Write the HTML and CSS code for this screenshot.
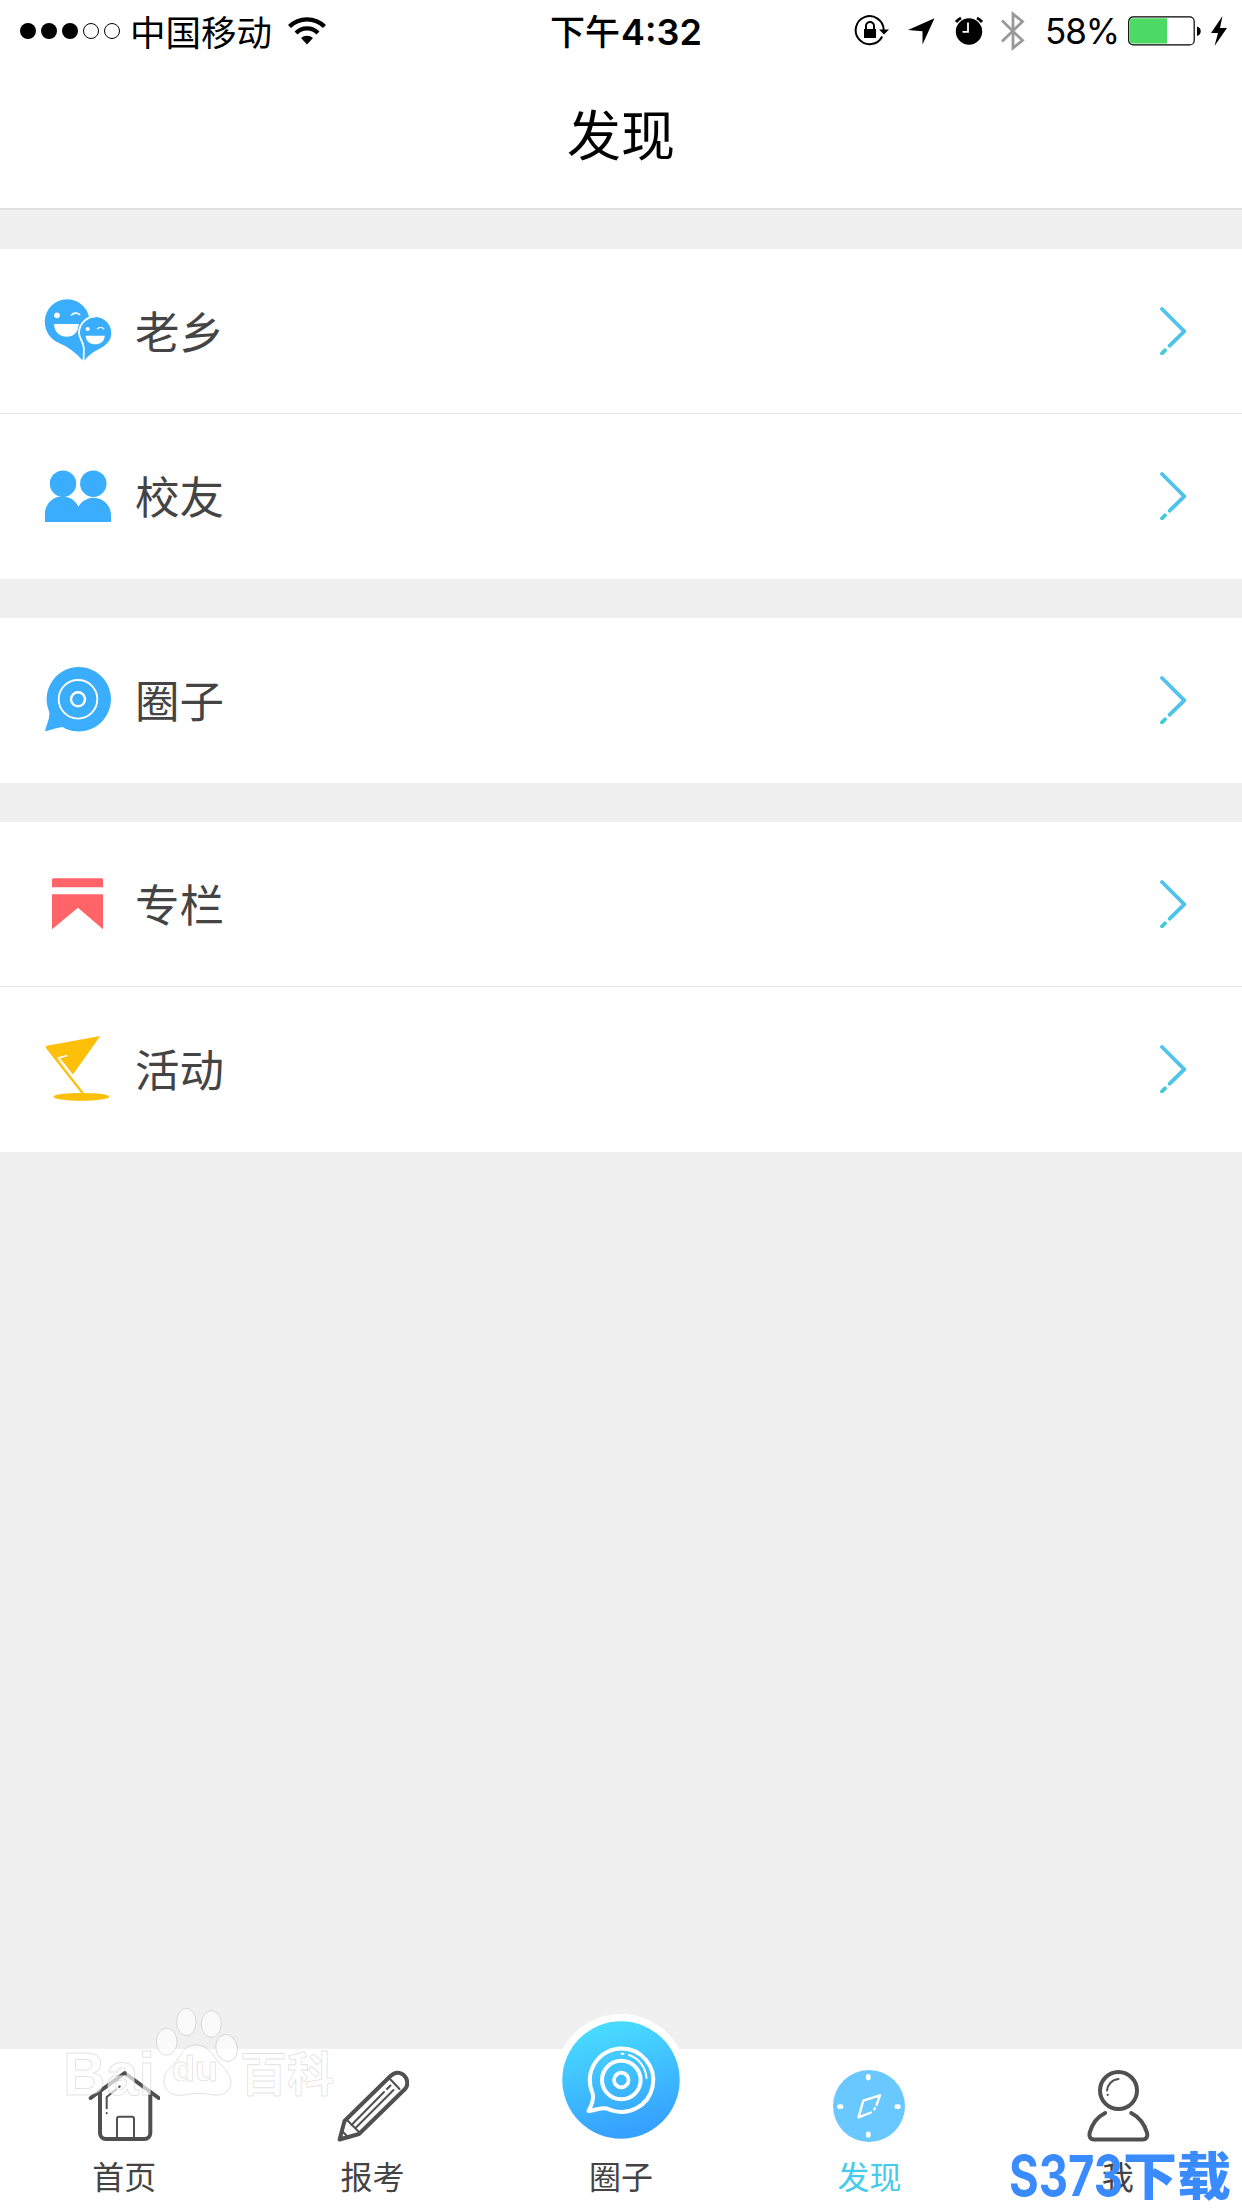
FILE: index.html
```html
<!DOCTYPE html>
<html lang="zh-CN">
<head>
  <meta charset="UTF-8" />
  <meta name="viewport" content="width=device-width, initial-scale=1" />
  <title>发现</title>
  <link rel="stylesheet" href="styles.css">
</head>
<body>
  <div class="app">
    <div class="status-bar">
      <div class="status-left">
        <svg class="signal" width="104" height="20" viewBox="0 0 104 20">
          <circle cx="10" cy="10" r="8"/>
          <circle cx="31" cy="10" r="8"/>
          <circle cx="52" cy="10" r="8"/>
          <circle class="empty" cx="73" cy="10" r="7.5"/>
          <circle class="empty" cx="94" cy="10" r="7.5"/>
        </svg>
        <span class="carrier">中国移动</span>
        <svg class="wifi" width="38" height="28" viewBox="0 0 38 28">
          <path d="M1.500 9.500a25 25 0 0 1 35 0M8 16a15.600 15.600 0 0 1 22 0" fill="none" stroke="#000" stroke-width="4.200"/>
          <path d="M19 27.500l-6-6.500a9 9 0 0 1 12 0z"/>
        </svg>
      </div>
      <div class="status-time">下午<b>4:32</b></div>
      <div class="status-right">
        <svg class="lock" width="36" height="32" viewBox="0 0 36 32">
          <path d="M28.200 21.500a14 14 0 1 1 1.500-6.500" fill="none" stroke="#000" stroke-width="2"/>
          <path d="M25 14.500h10l-5 5zM10 14h12v9H10z"/>
          <path d="M12 14v-3a4 4 0 0 1 8 0v3" fill="none" stroke="#000" stroke-width="2"/>
        </svg>
        <svg class="locate" width="27" height="27" viewBox="0 0 27 27"><path d="M26.500.3L14.500 26.500V13.300L0 12z"/></svg>
        <svg class="alarm" width="30" height="30" viewBox="0 0 30 30">
          <circle cx="15" cy="15.500" r="13.200"/>
          <path d="M2 6a15 15 0 0 1 5-4M28 6a15 15 0 0 0-5-4" fill="none" stroke="#000" stroke-width="3"/>
          <path d="M14 6.500v9.300H8.500" fill="none" stroke="#fff" stroke-width="1.800"/>
        </svg>
        <svg class="bluetooth" width="24" height="42" viewBox="0 0 24 42"><path d="M1 10.500l20.500 20L12 38V4l9.500 7.500L1 31.500" fill="none" stroke="#999" stroke-width="2.800"/></svg>
        <span class="percent">58%</span>
        <svg class="battery" width="74" height="30" viewBox="0 0 74 30">
          <rect x=".7" y=".9" width="65.500" height="28" rx="4.500" fill="none" stroke="#000" stroke-width="1.200"/>
          <path d="M4 2.300h35v25.200H4a2 2 0 0 1-2-2V4.300a2 2 0 0 1 2-2z" fill="#4cd964"/>
          <path d="M69 10.500c5 1 5 8.500 0 9.500z"/>
        </svg>
        <svg class="bolt" width="17" height="30" viewBox="0 0 17 30"><path d="M11.500 0L0 17h7L3.500 30 16 12H9z"/></svg>
      </div>
    </div>

    <header>发现</header>

    <main>
      <div class="group">
        <div class="row">
          <svg class="row-icon" viewBox="0 0 72 72">
            <path class="blue" d="M25 4.300A22.300 22.300 0 0 0 2.800 26.500C2.800 38 9.500 45 18 48.500S34 58 40.300 65.200C45 57 47 44 47.500 28A22.300 22.300 0 0 0 25 4.300z"/>
            <path class="blue" d="M53 22A16.200 16.200 0 0 0 37 38.300C37 42 41.500 47 41.800 51L41.300 66.500C47 60 51 57 57 54S69.300 46.500 69.300 38.300A16.200 16.200 0 0 0 53 22z"/>
            <path class="white-line" d="M53 21.500A16.500 16.500 0 0 0 37 38c0 5 4.500 9 4.800 15 .2 5-.2 9-.3 13" stroke-width="1.800"/>
            <circle cx="15" cy="20.300" r="2.900" fill="#fff"/>
            <path class="white-line" d="M29.500 20c2-2.400 6-2.600 8.200-.3" stroke-width="1.600"/>
            <path fill="#fff" d="M12 29h25c-.5 1.300-.8 2.500-1 4.800-1.500 5-6 8-11 8C18 41.800 12 37 12 29z"/>
            <circle cx="45.700" cy="34" r="2.100" fill="#fff"/>
            <path class="white-line" d="M55.500 33.800c1.800-1.700 4.500-1.700 6.200 0" stroke-width="1.300"/>
            <path fill="#fff" d="M43.700 40.700h19c0 11.500-19 11.500-19 0z"/>
          </svg>
          <span class="row-text">老乡</span>
          <svg class="arrow" viewBox="0 0 32 48"><path d="M4 2l22.300 22.300-14.600 14.400M7 43.300l-3 3"/></svg>
        </div>
        <div class="row">
          <svg class="row-icon" viewBox="0 0 72 72">
            <circle class="blue" cx="21" cy="23.700" r="13.200"/>
            <circle class="blue" cx="51.300" cy="23.700" r="13.200"/>
            <path class="blue" d="M3 62V56A17.500 17.500 0 0 1 36.300 46.700 17.500 17.500 0 0 1 69 56V62z"/>
          </svg>
          <span class="row-text">校友</span>
          <svg class="arrow" viewBox="0 0 32 48"><path d="M4 2l22.300 22.300-14.600 14.400M7 43.300l-3 3"/></svg>
        </div>
      </div>

      <div class="group">
        <div class="row">
          <svg class="row-icon" viewBox="0 0 72 72">
            <path class="blue" d="M36.500 3A32.200 32.200 0 1 1 20.500 63C15 63.500 9 66 4.500 67c-1.300.2-1.600-.5-1.200-1.500C5 60 8 54 7.300 48A32.200 32.200 0 0 1 36.500 3z"/>
            <circle class="white-line" cx="36" cy="35.300" r="19.300" stroke-width="1.900"/>
            <circle class="white-line" cx="36" cy="35.300" r="7" stroke-width="2.400"/>
          </svg>
          <span class="row-text">圈子</span>
          <svg class="arrow" viewBox="0 0 32 48"><path d="M4 2l22.300 22.300-14.600 14.400M7 43.300l-3 3"/></svg>
        </div>
      </div>

      <div class="group">
        <div class="row">
          <svg class="row-icon" viewBox="0 0 72 72">
            <path fill="#ff6468" d="M11 10.300h49l1 1v8H10v-8zM10 26.300h51v35L36 39.700l-26 21.600z"/>
          </svg>
          <span class="row-text">专栏</span>
          <svg class="arrow" viewBox="0 0 32 48"><path d="M4 2l22.300 22.300-14.600 14.400M7 43.300l-3 3"/></svg>
        </div>
        <div class="row">
          <svg class="row-icon" viewBox="0 0 72 72">
            <path fill="#fdbf08" d="M3.300 13L58.300 3 30.700 41.700z"/>
            <path d="M4.500 14L41 60.500" fill="none" stroke="#fdbf08" stroke-width="2.200"/>
            <path class="white-line" d="M24.500 22.700l-7.800 2L31 43" stroke-width="1.700"/>
            <ellipse cx="39.300" cy="63.800" rx="28" ry="3.900" fill="#fdbf08"/>
          </svg>
          <span class="row-text">活动</span>
          <svg class="arrow" viewBox="0 0 32 48"><path d="M4 2l22.300 22.300-14.600 14.400M7 43.300l-3 3"/></svg>
        </div>
      </div>
    </main>

    <nav class="tab-bar">
      <div class="tab">
        <svg class="tab-icon" viewBox="0 0 72 72">
          <path d="M2.700 28L36.700 3l34 25" stroke-width="4"/>
          <path d="M12 23v40a6 6 0 0 0 6 6h38.300a6 6 0 0 0 6-6V23" stroke-width="4"/>
          <path d="M29 68V48.700a2 2 0 0 1 2-2h13a2 2 0 0 1 2 2V68M18.700 38.300V27l9.300-7.500M31 17l.8-.6M18.700 43v.3" stroke-width="2"/>
        </svg>
        <span>首页</span>
      </div>
      <div class="tab">
        <svg class="tab-icon" viewBox="0 0 72 72">
          <path d="M2.600 69.500L7.500 51 53.500 6C59 .5 66 2.500 69 8c2 4 1.500 8.500-1.500 11.500L22 64z" stroke-width="4"/>
          <path d="M53.500 9.500L62.500 19M9.500 49.500L23 63M14.500 55L47 22M50 19l3.500-3.500M19 57.500L56.500 20M4.500 60.500L12 68" stroke-width="2"/>
        </svg>
        <span>报考</span>
      </div>
      <div class="tab">
        <svg class="tab-icon-big" viewBox="0 0 132 132">
          <defs>
            <linearGradient id="ball" x1="0" y1="0" x2=".25" y2="1">
              <stop offset="0" stop-color="#4be3ff"/>
              <stop offset="1" stop-color="#36a2ff"/>
            </linearGradient>
          </defs>
          <circle cx="66" cy="66" r="66" fill="#fff"/>
          <circle cx="66" cy="66" r="58.700" fill="url(#ball)"/>
          <path class="white-line" d="M66.300 34.500A31.700 31.700 0 1 1 54 95.300C48 92 43 96 33.500 97c3-6 6-12 4-18A31.700 31.700 0 0 1 66.300 34.500z" stroke-width="4"/>
          <circle class="white-line" cx="66.300" cy="66" r="19.300" stroke-width="4"/>
          <circle class="white-line" cx="66.300" cy="66" r="7.300" stroke-width="3.700"/>
          <path class="white-line" d="M74 41A26 26 0 0 1 91.500 64M66.500 39.800h2" stroke-width="2"/>
        </svg>
        <span>圈子</span>
      </div>
      <div class="tab active">
        <svg class="tab-icon" viewBox="0 0 72 72">
          <circle cx="36" cy="36" r="36" fill="#69c8ff" stroke="none"/>
          <path d="M35.300 6.500v1.600M35.300 63.800v1.600M6.500 36.700h1.600M63.800 36.700h1.600" stroke="#fff" stroke-width="4.800"/>
          <path d="M43.500 35L47 25.300 30.300 30.700 25.600 47.300 38 42.500M41.300 39.500l.6-1.200" stroke="#fff" stroke-width="2.400"/>
        </svg>
        <span>发现</span>
      </div>
      <div class="tab">
        <svg class="tab-icon" viewBox="0 0 72 72">
          <circle cx="36.500" cy="20.600" r="18.500" stroke-width="4"/>
          <path d="M23.200 43C15 47 10 54 7.600 63c-.8 4 1 6.500 4.500 6.500h48.500c3.500 0 5.500-2.500 4.500-6.500C62.500 54 57 47 49.200 43" stroke-width="4"/>
          <path d="M25 20.500c.5-6 5-11 11.500-11.500M25.700 24.700v.2" stroke-width="2"/>
        </svg>
        <span>我</span>
      </div>
    </nav>

    <svg class="mark-left" width="290" height="104" viewBox="0 0 290 104">
      <g class="mark-shape">
        <ellipse cx="126.300" cy="22" rx="9.700" ry="13.700"/>
        <ellipse cx="151.300" cy="24" rx="10" ry="13.300"/>
        <ellipse cx="106.700" cy="41.700" rx="10.300" ry="13.500"/>
        <ellipse cx="166.700" cy="48" rx="10.700" ry="13.500" transform="rotate(-12 166.700 48)"/>
        <path d="M136 45c10 0 15 7 20 14s14 12 15 23c0 9-8 14-17 13-11-2-21-2-30 0-12 2-21-4-20-16 1-9 9-12 14-20s8-14 18-14z"/>
      </g>
      <text class="mark-text" x="3" y="95" font-size="62" textLength="92" lengthAdjust="spacingAndGlyphs">Bai</text>
      <text class="mark-text" x="112" y="81" font-size="35" textLength="46" lengthAdjust="spacingAndGlyphs">du</text>
      <text class="mark-text" x="180" y="91" font-size="47" textLength="94" lengthAdjust="spacingAndGlyphs">百科</text>
    </svg>

    <svg class="mark-right" width="236" height="62" viewBox="0 0 236 62">
      <text class="digits" x="1" y="49" font-size="56" textLength="114" lengthAdjust="spacingAndGlyphs">S373</text>
      <text x="115" y="48" font-size="51" textLength="108" lengthAdjust="spacingAndGlyphs">下载</text>
    </svg>
  </div>

  <!-- 箭头渐变 -->
  <svg class="defs" width="0" height="0">
    <linearGradient id="arrowLine" gradientUnits="userSpaceOnUse" x1="0" y1="0" x2="0" y2="48">
      <stop offset="0" stop-color="#50c4ee"/>
      <stop offset=".6" stop-color="#4fc1ee"/>
      <stop offset="1" stop-color="#42cbd2"/>
    </linearGradient>
  </svg>
</body>
</html>
```
FILE: styles.css
```css
* {
  box-sizing: border-box;
}

body {
  margin: 0;
  font-family: "Noto Sans CJK SC", sans-serif;
  background: #f0f0f0;
  color: #444;
}

svg {
  display: block;
  flex: none;
}

.app {
  position: relative;
  width: 1242px;
  height: 2208px;
  display: flex;
  flex-direction: column;
  overflow: hidden;
}

/* 状态栏 */
.status-bar {
  height: 60px;
  display: grid;
  grid-template-columns: 550px auto 1fr;
  background: #fff;
  color: #000;
  font-size: 35px;
  line-height: 60px;
}

.status-left,
.status-right {
  display: flex;
  align-items: center;
  height: 61px;
}

.status-left {
  padding-left: 18px;
}

.signal .empty {
  fill: none;
  stroke: #000;
  stroke-width: 1;
}

.carrier {
  margin-left: 8px;
  height: 60px;
  font-size: 35.5px;
  line-height: 59px;
}

.wifi {
  margin-left: 16px;
}

.status-time {
  font-weight: 500;
  line-height: 59px;
  white-space: nowrap;
}

.status-time b {
  font-family: Inter, sans-serif;
  font-size: 36px;
  font-weight: 600;
  margin-left: 1px;
}

.status-right {
  justify-content: flex-end;
  padding: 1px 14px 0 0;
}

.lock {
  margin-right: 1px;
}

.locate {
  margin-left: 17px;
}

.alarm {
  margin-left: 19px;
}

.bluetooth {
  margin-left: 17px;
}

.percent {
  margin-left: 20px;
  height: 60px;
  line-height: 61px;
  font-family: Inter, sans-serif;
  font-size: 35px;
  letter-spacing: -1.1px;
}

.battery {
  margin-left: 9px;
}

.bolt {
  margin-left: 9px;
}

header {
  height: 150px;
  background: #fff;
  border-bottom: 2px solid #e0e0e0;
  color: #000;
  font-size: 54px;
  line-height: 145px;
  text-align: center;
}

/* 列表 */
main {
  flex: 1;
  padding-top: 39px;
}

.group {
  margin-bottom: 39px;
  background: #fff;
}

.row {
  height: 165px;
  padding: 0 52px 1px 42px;
  display: flex;
  align-items: center;
}

.row + .row {
  box-shadow: 0 -1px 0 #e6e6e6;
}

.row-icon {
  width: 72px;
  height: 72px;
}

.row-text {
  flex: 1;
  margin-left: 21px;
  padding-bottom: 2px;
  font-size: 44.5px;
  line-height: 60px;
}

.blue {
  fill: #3aaefc;
}

.white-line {
  fill: none;
  stroke: #fff;
  stroke-linecap: round;
  stroke-linejoin: round;
}

.arrow {
  width: 32px;
  height: 48px;
  fill: none;
  stroke: url(#arrowLine);
  stroke-width: 3.8;
  stroke-linecap: round;
  stroke-linejoin: round;
}

/* 底部导航 */
.tab-bar {
  height: 159px;
  display: flex;
  background: #fff;
}

.tab {
  flex: 1;
  display: flex;
  flex-direction: column;
  align-items: center;
  justify-content: flex-end;
  padding-bottom: 13px;
  font-size: 32px;
  line-height: 40px;
}

.tab-icon {
  width: 72px;
  height: 72px;
  margin-bottom: 13px;
  fill: none;
  stroke: #505050;
  stroke-linecap: round;
  stroke-linejoin: round;
}

.tab-icon-big {
  width: 132px;
  height: 132px;
  margin-bottom: 9px;
}

.tab.active {
  color: #45cbec;
}

/* 水印 */
.mark-left {
  position: absolute;
  left: 60px;
  top: 2000px;
}

.mark-shape,
.mark-text {
  fill: rgba(255, 255, 255, 0.68);
  stroke: rgba(0, 0, 0, 0.12);
  stroke-width: 1;
}

.mark-text {
  font-family: "Liberation Sans", "Noto Sans CJK SC", sans-serif;
  font-weight: bold;
}

.mark-right {
  position: absolute;
  right: -2px;
  bottom: -1px;
  fill: #3a8bff;
  font-family: "Noto Sans CJK SC", sans-serif;
  font-weight: 900;
}

.mark-right .digits {
  font-family: Inter, sans-serif;
  font-weight: 700;
}

.defs {
  position: absolute;
}
```
